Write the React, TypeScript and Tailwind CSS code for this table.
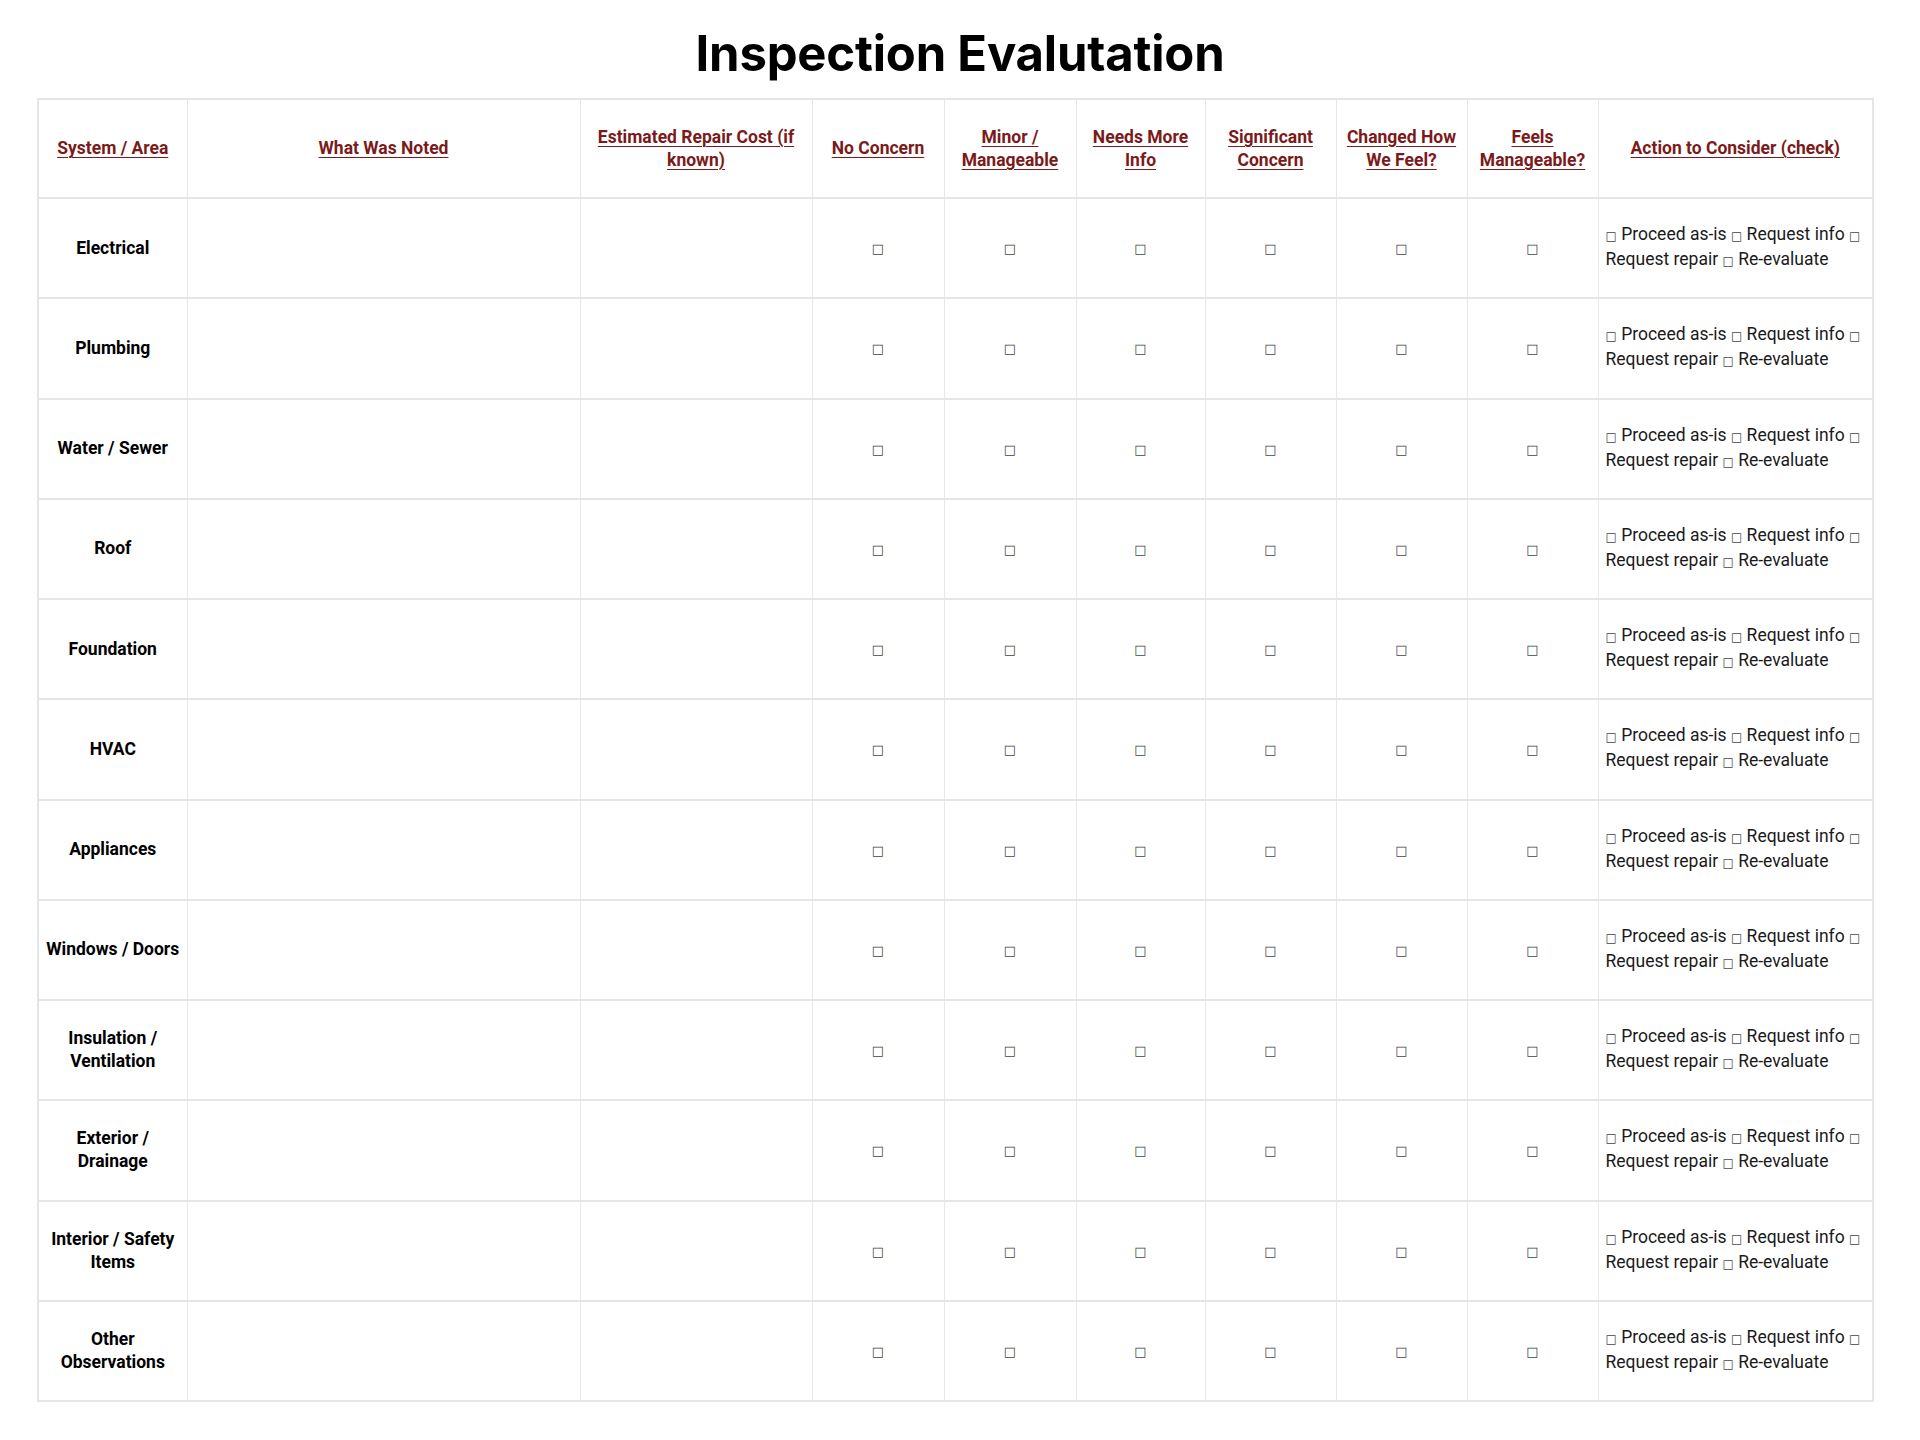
const columns = [
  { label: "System / Area", width: "w-[149px]" },
  { label: "What Was Noted", width: "w-[393px]" },
  { label: "Estimated Repair Cost (if known)", width: "w-[232px]" },
  { label: "No Concern", width: "w-[132px]" },
  { label: "Minor / Manageable", width: "w-[132px]" },
  { label: "Needs More Info", width: "w-[129px]" },
  { label: "Significant Concern", width: "w-[131px]" },
  { label: "Changed How We Feel?", width: "w-[131px]" },
  { label: "Feels Manageable?", width: "w-[131px]" },
  { label: "Action to Consider (check)", width: "w-[275px]" },
];

const areas = [
  "Electrical",
  "Plumbing",
  "Water / Sewer",
  "Roof",
  "Foundation",
  "HVAC",
  "Appliances",
  "Windows / Doors",
  "Insulation / Ventilation",
  "Exterior / Drainage",
  "Interior / Safety Items",
  "Other Observations",
];

const Box = ({ small }: { small?: boolean }) => (
  <span
    className={`${small ? "text-[12px]" : "text-[13px]"} text-[#444] font-['DejaVu_Sans',sans-serif]`}
  >
    □
  </span>
);

export default function App() {
  return (
    <div className="w-[1920px] min-h-[1440px] bg-white pt-[24px]">
      <h1 className="text-center text-[49px] leading-[60px] font-bold text-black font-['Inter',sans-serif] tracking-[-0.2px] mb-[14px]">
        Inspection Evalutation
      </h1>
      <div className="px-[37px]">
        <table className="table-fixed w-[1835px] border-collapse border-2 border-[#e5e5e5] font-['Roboto',sans-serif]">
          <thead>
            <tr className="h-[99px]">
              {columns.map((c) => (
                <th
                  key={c.label}
                  className={`${c.width} border-x border-x-[#e8e8e8] border-b-2 border-b-[#e5e5e5] px-[10px] text-center align-middle text-[17.5px] leading-[23px] font-bold text-[#7b1a1a] underline underline-offset-[3px] decoration-1`}
                >
                  {c.label}
                </th>
              ))}
            </tr>
          </thead>
          <tbody>
            {areas.map((a) => (
              <tr key={a} className="h-[100.25px]">
                <td className="border-x border-x-[#e8e8e8] border-b-2 border-b-[#e5e5e5] px-[6px] text-center align-middle text-[17.5px] leading-[23px] font-bold text-black">
                  {a}
                </td>
                <td className="border-x border-x-[#e8e8e8] border-b-2 border-b-[#e5e5e5]" />
                <td className="border-x border-x-[#e8e8e8] border-b-2 border-b-[#e5e5e5]" />
                {[0, 1, 2, 3, 4, 5].map((i) => (
                  <td
                    key={i}
                    className="border-x border-x-[#e8e8e8] border-b-2 border-b-[#e5e5e5] text-center align-middle"
                  >
                    <Box />
                  </td>
                ))}
                <td className="border-x border-x-[#e8e8e8] border-b-2 border-b-[#e5e5e5] px-[7px] text-left align-middle text-[17.5px] leading-[23px] text-[#1a1a1a]">
                  <Box small /> Proceed as-is <Box small /> Request info <Box small /> Request repair{" "}
                  <Box small /> Re-evaluate
                </td>
              </tr>
            ))}
          </tbody>
        </table>
      </div>
    </div>
  );
}
